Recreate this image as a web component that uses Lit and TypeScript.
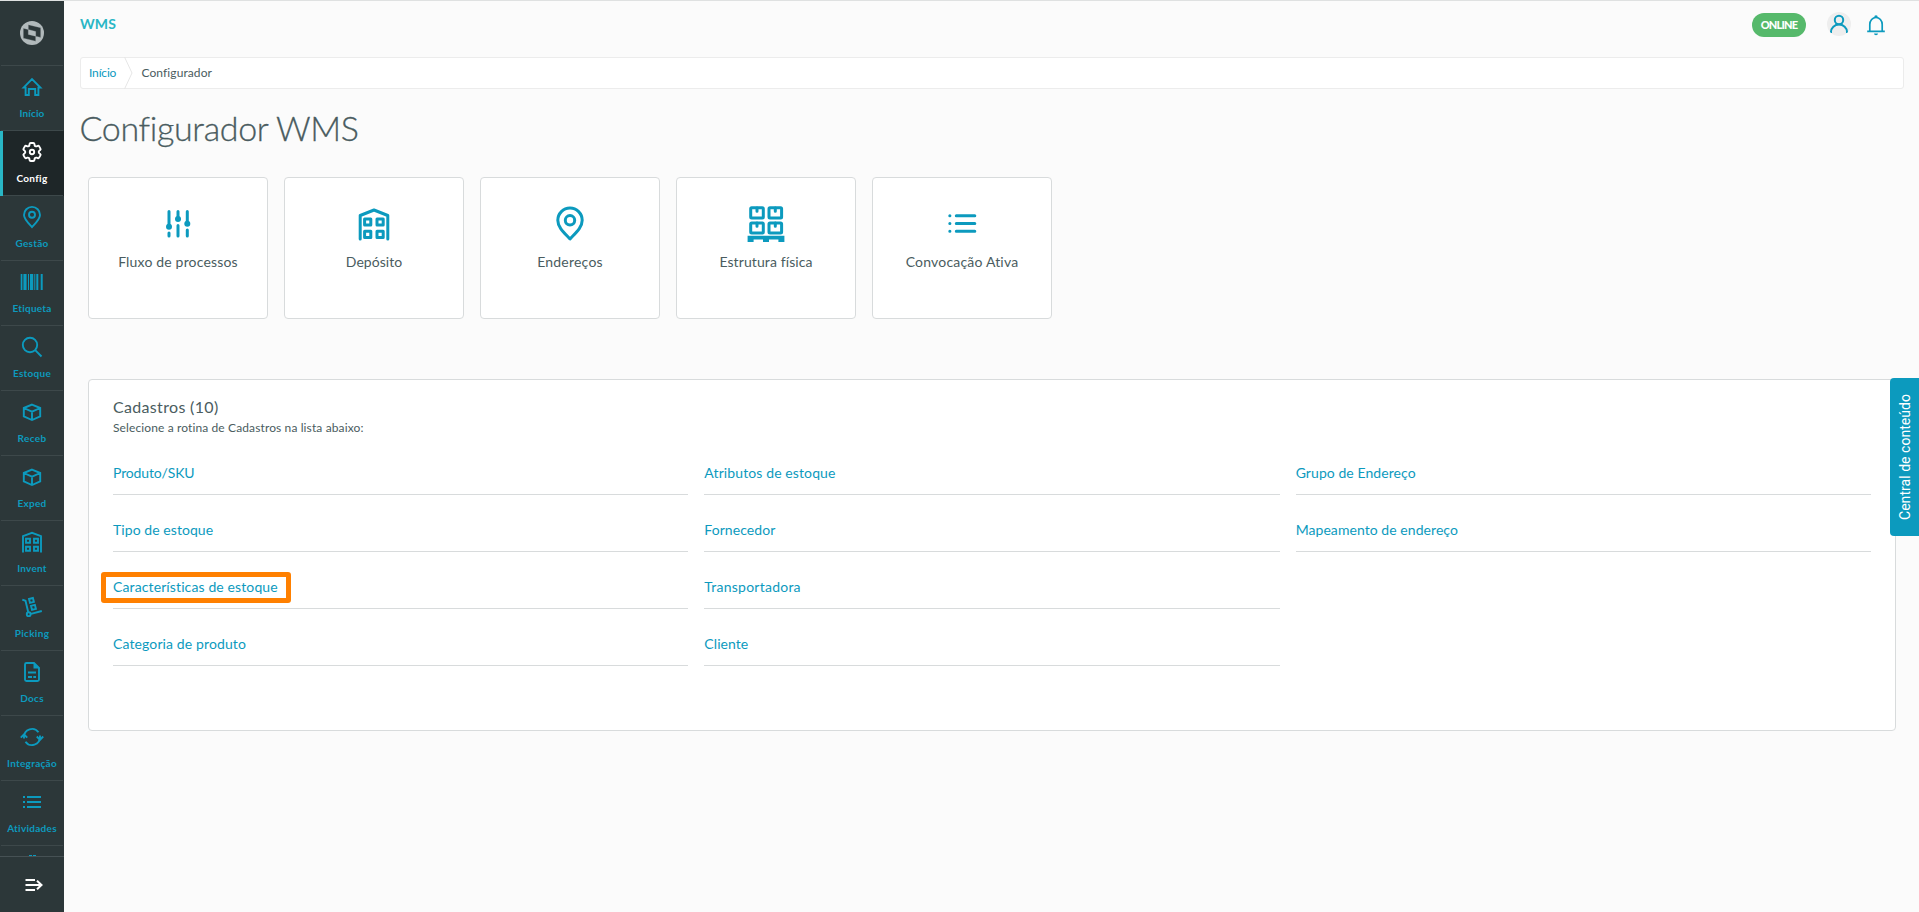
import { LitElement, html, css, svg } from "lit";
import { customElement, property } from "lit/decorators.js";
import { classMap } from "lit/directives/class-map.js";

/** Single-line label whose tracking is adjusted so that it spans `size` pixels. */
@customElement("fit-text")
class FitText extends LitElement {
  @property() text = "";
  @property({ type: Number }) size = 0;

  static styles = css`
    :host { display: inline-block; white-space: nowrap; }
    span { display: inline-block; font-variant-ligatures: none; }
  `;

  firstUpdated() {
    const span = this.renderRoot.querySelector("span") as HTMLElement;
    const box = span.getBoundingClientRect();
    const natural = Math.max(box.width, box.height);
    if (this.size && natural) {
      span.style.letterSpacing = `${(this.size - natural) / this.text.length}px`;
    }
  }

  render() {
    return html`<span>${this.text}</span>`;
  }
}

const boxIcon = svg`<path d="M12 4.6 20.2 8v8.4L12 20 3.8 16.4V8Z M3.8 8 12 11.6 20.2 8 M12 11.6V20"/>`;
const rows = svg`<path d="M3 7h2M3 12h2M3 17h2M7 7h14M7 12h14M7 17h14"/>`;

const menu = [
  { label: "Início", size: 25, icon: svg`<path d="M3.6 12.6 12 4l8.4 8.6h-2V20h-3.2v-6H8.8v6H5.6v-7.4Z"/>` },
  {
    label: "Config", size: 31, active: true,
    icon: svg`<path d="M9.594 3.94c.09-.542.56-.94 1.11-.94h2.593c.55 0 1.02.398 1.11.94l.213 1.281c.063.374.313.686.645.87.074.04.147.083.22.127.325.196.72.257 1.075.124l1.217-.456a1.125 1.125 0 0 1 1.37.49l1.296 2.247a1.125 1.125 0 0 1-.26 1.431l-1.003.827c-.293.241-.438.613-.43.992a7.723 7.723 0 0 1 0 .255c-.008.378.137.75.43.991l1.004.827c.424.35.534.955.26 1.43l-1.298 2.247a1.125 1.125 0 0 1-1.369.491l-1.217-.456c-.355-.133-.75-.072-1.076.124a6.47 6.47 0 0 1-.22.128c-.331.183-.581.495-.644.869l-.213 1.281c-.09.543-.56.94-1.11.94h-2.594c-.55 0-1.019-.398-1.11-.94l-.213-1.281c-.062-.374-.312-.686-.644-.87a6.52 6.52 0 0 1-.22-.127c-.325-.196-.72-.257-1.076-.124l-1.217.456a1.125 1.125 0 0 1-1.369-.49l-1.297-2.247a1.125 1.125 0 0 1 .26-1.431l1.004-.827c.292-.24.437-.613.43-.991a6.932 6.932 0 0 1 0-.255c.007-.38-.138-.751-.43-.992l-1.004-.827a1.125 1.125 0 0 1-.26-1.43l1.297-2.247a1.125 1.125 0 0 1 1.37-.491l1.216.456c.356.133.751.072 1.076-.124.072-.044.146-.086.22-.128.332-.183.582-.495.644-.869l.214-1.28Z"/><circle cx="12" cy="12" r="2.2"/>`,
  },
  { label: "Gestão", size: 33, icon: svg`<path d="M12 22C8.500 18.200 4 14 4 9.900A8 8 0 0 1 20 9.900C20 14 15.500 18.200 12 22Z"/><circle cx="12" cy="9.700" r="3"/>` },
  { label: "Etiqueta", size: 39, icon: svg`<path class="solid" d="M.7 4h1.700v16H.7ZM3.400 4h3.200v16H3.400ZM8 4h1v16H8ZM10 4h3.200v16H10ZM14.300 4h1v16h-1ZM16.300 4h2v16h-2ZM20.700 4h2v16h-2Z"/>` },
  { label: "Estoque", size: 38, icon: svg`<circle cx="10" cy="10" r="7.2"/><path d="m15.200 15.200 6.300 6.300"/>` },
  { label: "Receb", size: 29, icon: boxIcon },
  { label: "Exped", size: 29, icon: boxIcon },
  { label: "Invent", size: 29.7, icon: svg`<path d="M3 22.500V6.200L12 2.800l9 3.400v16.300"/><path d="M6 8.700h4v4H6ZM14 8.700h4v4h-4ZM6 16.800h4v4H6ZM14 16.800h4v4h-4Z"/>` },
  { label: "Picking", size: 34.7, icon: svg`<path d="m2.300 4.600 3.200 1.200L8.200 17M11 18.900l10.800-2.900"/><circle cx="8.700" cy="19.200" r="1.900"/><path d="m9 4 3.900-1 1 3.900-3.900 1ZM11 10.900l3.900-1 1 3.900-3.900 1Z"/>` },
  { label: "Docs", size: 23.700, icon: svg`<path d="M14 3H6.500Q5 3 5 4.500v15Q5 21 6.500 21h11q1.500 0 1.500-1.500V8Z"/><path class="solid" d="M13.500 2.500 19.500 8.500H13.500Z"/><path d="M8 12.500h8M8 17h4M13.300 17h2.700"/>` },
  { label: "Integração", size: 50, icon: svg`<path d="M4 13.500V12a8 8 0 0 1 14.500-4.700M20 10.500V12a8 8 0 0 1-14.500 4.700M.8 12.700 4 9.300l3.200 3.400M16.800 11.500 20 14.800l3.200-3.300"/>` },
  { label: "Atividades", size: 49.700, icon: rows },
];

const cards = [
  {
    label: "Fluxo de processos", size: 119.700,
    icon: svg`<path d="M11 7.500V22M11 29v3M20 7.500V14M20 21.500V32M29.300 7.500V19M29.300 26v6"/><g class="solid"><circle cx="11" cy="22.700" r="3"/><circle cx="20" cy="15" r="3"/><circle cx="29.300" cy="19.700" r="3"/></g>`,
  },
  {
    label: "Depósito", size: 56.300,
    icon: svg`<path d="M6.200 35V11.500L20 6l13.800 5.500V35"/><path d="M10.600 14.900h6.200v6.200h-6.200ZM23 14.900h6.200v6.200H23ZM10.600 27.200h6.200v6.200h-6.200ZM23 27.200h6.200v6.200H23Z"/>`,
  },
  {
    label: "Endereços", size: 65.700,
    icon: svg`<path d="M20 35C14.500 29 7.800 23.500 7.800 16.200a12.200 12.200 0 0 1 24.400 0C32.200 23.500 25.500 29 20 35Z"/><circle cx="20" cy="16.300" r="4.700"/>`,
  },
  {
    label: "Estrutura física", size: 93.200,
    icon: svg`<rect x="4.700" y="3.800" width="12.600" height="10.200" rx="1"/><rect x="23" y="3.800" width="12.600" height="10.200" rx="1"/><rect x="4.700" y="18.900" width="12.600" height="10.200" rx="1"/><rect x="23" y="18.900" width="12.600" height="10.200" rx="1"/><path d="M11 4v3.200M29.300 4v3.200M11 19v3.200M29.300 19v3.200"/><path class="solid" d="M1.600 31.700h36.800V38h-6v-2.600H23V38h-6v-2.600H7.600V38h-6Z"/>`,
  },
  {
    label: "Convocação Ativa", size: 112.700,
    icon: svg`<path d="M7.800 11.700h.1M7.800 19.500h.1M7.800 27.300h.1M14.300 11.700h18.500M14.300 19.500h18.500M14.300 27.300h18.500"/>`,
  },
];

const columns = [
  [["Produto/SKU", 81.5], ["Tipo de estoque", 100.2], ["Características de estoque", 164.8], ["Categoria de produto", 133]],
  [["Atributos de estoque", 131.2], ["Fornecedor", 71], ["Transportadora", 96.5], ["Cliente", 44]],
  [["Grupo de Endereço", 120], ["Mapeamento de endereço", 162.3]],
] as [string, number][][];

@customElement("app-root")
class AppRoot extends LitElement {
  static styles = css`
    :host {
      display: flex;
      position: relative;
      box-sizing: border-box;
      height: 100vh;
      overflow: hidden;
      border-top: 1px solid #dfe1e1;
      background: #fbfbfb;
      color: #4a5c60;
      font-family: Lato, "Open Sans", sans-serif;
      font-size: 14px;
    }
    *, *::before, *::after { box-sizing: border-box; }
    svg { display: block; fill: none; stroke: currentColor; }
    .solid { fill: currentColor; stroke: none; }

    .sidebar {
      display: flex;
      flex-direction: column;
      flex: none;
      width: 64px;
      background: #2c3739;
      color: #0c9abe;
    }
    .logo, .item {
      display: flex;
      flex-direction: column;
      align-items: center;
      flex: none;
      height: 65px;
      background: linear-gradient(#3d484a, #3d484a) 50% 100% / 62px 1px no-repeat;
    }
    .logo { padding-top: 20px; }
    .mark { fill: #b1b9bb; stroke: none; }
    .mark-cut { fill: #2c3739; fill-rule: evenodd; stroke: #b1b9bb; stroke-width: .3; }
    .menu { flex: 1; min-height: 0; overflow: hidden; }
    .item {
      padding-top: 9px;
      font-size: 10px;
      font-weight: 700;
      line-height: 12px;
    }
    .item svg { stroke-width: 1.900; }
    .item fit-text { margin-top: 8px; }
    .active {
      color: #fff;
      background-color: #1e2628;
      box-shadow: inset 3px 0 #29b6c5;
    }
    .more { display: flex; justify-content: center; gap: 1px; padding-top: 9px; }
    .more i { width: 3px; height: 1px; background: #0c9abe; }
    .toggle {
      flex: none;
      height: 56px;
      padding: 16px 0 0 22px;
      border-top: 1px solid #465154;
      color: #fff;
    }

    .page { flex: 1; min-width: 0; padding: 0 15px 0 16px; }
    .topbar { display: flex; align-items: center; height: 56px; padding: 0 16px 17px 0; }
    .brand { flex: 1; color: #29b6c5; font-weight: 700; line-height: 20px; padding-top: 6px; }
    .status {
      display: flex;
      align-items: center;
      justify-content: center;
      width: 54px;
      height: 24px;
      margin-top: 8px;
      border-radius: 12px;
      background: #56b96b;
      color: #fff;
      font-size: 11px;
      font-weight: 900;
    }
    .user, .bell { width: 24px; height: 24px; color: #0c9abe; stroke-width: 2; }
    .user { margin: 6px 0 0 21px; border-radius: 50%; background: #eee; }
    .bell { margin: 8px 0 0 13px; stroke-width: 1.700; }

    .crumbs {
      display: flex;
      align-items: center;
      height: 32px;
      padding-left: 8px;
      border: 1px solid #ececec;
      border-radius: 3px;
      background: #fff;
      font-size: 12px;
      line-height: 30px;
    }
    .crumbs a { width: 35px; color: #0c9abe; }
    .crumbs svg { margin-right: 8.500px; stroke: #e6e6e6; }
    h1 {
      margin: 19px 0 0 -.5px;
      font-size: 34px;
      line-height: 40px;
      font-weight: 300;
      -webkit-text-stroke: .3px #4a5c60;
    }
    .cards { display: flex; gap: 16px; margin: 29px 8px 0; }
    .card {
      display: flex;
      flex-direction: column;
      align-items: center;
      width: 180px;
      height: 142px;
      padding-top: 26px;
      border: 1px solid #d8dbdc;
      border-radius: 4px;
      background: #fff;
      line-height: 20px;
    }
    .card svg { color: #0c9abe; stroke-width: 3; stroke-linecap: round; stroke-linejoin: round; }
    .card fit-text { margin-top: 8px; }

    .panel {
      height: 352px;
      margin: 60px 8px 0;
      padding: 17px 24px 0;
      border: 1px solid #d8dbdc;
      border-radius: 4px;
      background: #fff;
    }
    .title { font-size: 16px; line-height: 20px; }
    .hint { font-size: 12px; line-height: 16px; margin-top: 3px; }
    .columns { display: grid; grid-template-columns: repeat(3, 1fr); gap: 16px; padding-top: 2px; }
    .link {
      height: 57px;
      padding-top: 25px;
      border-bottom: 1px solid #d8dbdc;
      color: #0c9abe;
      line-height: 20px;
    }
    .link a { position: relative; }
    .marked::after {
      content: "";
      position: absolute;
      top: -6px;
      left: -12px;
      width: 190px;
      height: 31px;
      border: 5px solid #ff8000;
      border-radius: 3px;
    }

    .drawer {
      position: absolute;
      top: 377px;
      right: 0;
      display: flex;
      align-items: center;
      justify-content: center;
      width: 29px;
      height: 158px;
      border-radius: 0 4px 4px 0;
      background: #0c9abe;
      color: #fff;
      font: 400 14px/20px Roboto, sans-serif;
      writing-mode: vertical-rl;
      transform: rotate(180deg);
    }
  `;

  render() {
    return html`
      <nav class="sidebar">
        <div class="logo">
          <svg width="24" height="24" viewBox="0 0 24 24">
            <circle class="mark" cx="12" cy="12" r="12"/>
            <path class="mark-cut" d="M3.300 7.200 15.700 10.500v9.700L3.300 17.200ZM8.300 3.700 20.700 6.700v9.700L8.300 13.400Z"/>
          </svg>
        </div>
        <div class="menu">
          ${menu.map((m) => html`
            <div class=${classMap({ item: true, active: !!m.active })}>
              <svg width="24" height="24" viewBox="0 0 24 24">${m.icon}</svg>
              <fit-text .text=${m.label} .size=${m.size}></fit-text>
            </div>`)}
          <div class="more"><i></i><i></i></div>
        </div>
        <div class="toggle">
          <svg width="24" height="24" viewBox="0 0 24 24" stroke-width="2">
            <path d="M3.500 7h9.500M3.500 12h16M3.500 17h9.500M15 7.800l4.500 4.200-4.500 4.200"/>
          </svg>
        </div>
      </nav>
      <main class="page">
        <header class="topbar">
          <span class="brand"><fit-text text="WMS" .size=${36}></fit-text></span>
          <span class="status"><fit-text text="ONLINE" .size=${36.5}></fit-text></span>
          <svg class="user" viewBox="0 0 24 24"><circle cx="12" cy="8" r="4.200"/><path d="M4 21v-1a8 7.500 0 0 1 16 0v1"/></svg>
          <svg class="bell" viewBox="0 0 24 24"><path d="M3.200 18.300h17.600M5.800 18v-6.500a6.200 7 0 0 1 12.400 0V18"/><path class="solid" d="M10.200 4.500a1.800 2.300 0 0 1 3.600 0ZM10 20.500h4a2 1.800 0 0 1-4 0Z"/></svg>
        </header>
        <div class="crumbs">
          <a><fit-text text="Início" .size=${29}></fit-text></a>
          <svg width="9" height="32" viewBox="0 0 9 32"><path d="M.5 0 8 16 .5 32"/></svg>
          <fit-text text="Configurador" .size=${70.5}></fit-text>
        </div>
        <h1><fit-text text="Configurador WMS" .size=${279}></fit-text></h1>
        <section class="cards">
          ${cards.map((c) => html`
            <div class="card">
              <svg width="40" height="40" viewBox="0 0 40 40">${c.icon}</svg>
              <fit-text .text=${c.label} .size=${c.size}></fit-text>
            </div>`)}
        </section>
        <section class="panel">
          <div class="title"><fit-text text="Cadastros (10)" .size=${105.5}></fit-text></div>
          <div class="hint"><fit-text text="Selecione a rotina de Cadastros na lista abaixo:" .size=${250.5}></fit-text></div>
          <div class="columns">
            ${columns.map((col) => html`<div>
              ${col.map(([label, size]) => html`
                <div class="link">
                  <a class=${classMap({ marked: label.startsWith("Caract") })}><fit-text .text=${label} .size=${size}></fit-text></a>
                </div>`)}
            </div>`)}
          </div>
        </section>
      </main>
      <div class="drawer"><fit-text text="Central de conteúdo" .size=${126}></fit-text></div>
    `;
  }
}
